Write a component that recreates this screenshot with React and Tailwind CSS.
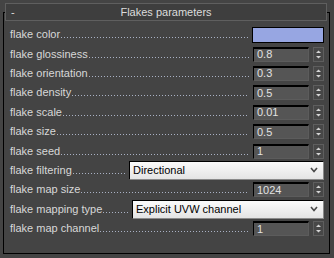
import React from 'react';

const font = { fontFamily: '"Liberation Sans", Arial, sans-serif' };

const rows = [
  { label: 'flake color', kind: 'color' },
  { label: 'flake glossiness', kind: 'spin', value: '0.8' },
  { label: 'flake orientation', kind: 'spin', value: '0.3' },
  { label: 'flake density', kind: 'spin', value: '0.5' },
  { label: 'flake scale', kind: 'spin', value: '0.01' },
  { label: 'flake size', kind: 'spin', value: '0.5' },
  { label: 'flake seed', kind: 'spin', value: '1' },
  { label: 'flake filtering', kind: 'select', value: 'Directional', width: 'w-[195px]' },
  { label: 'flake map size', kind: 'spin', value: '1024' },
  { label: 'flake mapping type', kind: 'select', value: 'Explicit UVW channel', width: 'w-[192px]' },
  { label: 'flake map channel', kind: 'spin', value: '1' },
];

function Spinner({ value }) {
  return (
    <div className="flex items-center gap-[4px] ml-[4px]">
      <div className="w-[56px] h-[15px] bg-[#555555] border-t-2 border-l border-black border-r border-r-[#5c5c5c] border-b border-b-[#5c5c5c] flex items-center pl-[3px] text-[11px] leading-none text-[#e2e2e2]">
        {value}
      </div>
      <div className="w-[11px] h-[15px] border border-[#5e5e5e] bg-[#474747] flex items-center justify-center">
        {/* up / down arrows */}
        <svg width="7" height="11" viewBox="0 0 7 11">
          <path d="M3.5 1.5 L6 4 L1 4 Z" fill="#d4d4d4" />
          <path d="M1 7 L6 7 L3.5 9.5 Z" fill="#d4d4d4" />
        </svg>
      </div>
    </div>
  );
}

function Select({ value, width }) {
  return (
    <div className={`${width} h-[19px] ml-[4px] flex items-center justify-between pl-[3px] pr-[5px] border-t border-l border-black border-r border-r-[#8a8a8a] border-b border-b-[#8a8a8a] bg-gradient-to-b from-[#fbfbfb] to-[#e4e4e4]`}>
      <span className="text-[11px] leading-none text-black">{value}</span>
      <svg width="8" height="6" viewBox="0 0 8 6">
        <path d="M1 1 L4 4.5 L7 1" fill="none" stroke="#4a4a4a" strokeWidth="1.6" />
      </svg>
    </div>
  );
}

function Row({ row }) {
  return (
    <div className="flex items-center h-[19.4px]">
      <div className="flex-1 flex items-center min-w-0">
        <span className="text-[11px] leading-none text-[#d8d8d8] whitespace-nowrap">{row.label}</span>
        <div className="flex-1 h-px mt-[6px] ml-[1px] bg-[repeating-linear-gradient(90deg,#a9b1c4_0_1px,transparent_1px_3px)]" />
      </div>
      {row.kind === 'color' && (
        <div className="w-[72px] h-[16px] ml-[4px] border border-black bg-[#97a6e2]" />
      )}
      {row.kind === 'spin' && <Spinner value={row.value} />}
      {row.kind === 'select' && <Select value={row.value} width={row.width} />}
    </div>
  );
}

export default function App() {
  return (
    <div className="w-[334px] h-[258px] bg-[#444444] pt-[12px] pl-[3px] pr-[4px]" style={font}>
      <div className="relative h-[242px] border border-black pt-[12px] pl-[6px] pr-[5px]">
        {/* rollout title bar sits over the frame's top edge */}
        <div className="absolute top-[-10px] left-[1px] right-[2px] h-[18px] bg-[#3e3e3e] border border-[#5f5f5f] flex items-center text-[11px] leading-none text-[#dcdcdc]">
          <span className="pl-[5px] w-[20px]">-</span>
          <span className="flex-1 text-center pr-[20px]">Flakes parameters</span>
        </div>
        {rows.map((r) => (
          <Row key={r.label} row={r} />
        ))}
      </div>
    </div>
  );
}
